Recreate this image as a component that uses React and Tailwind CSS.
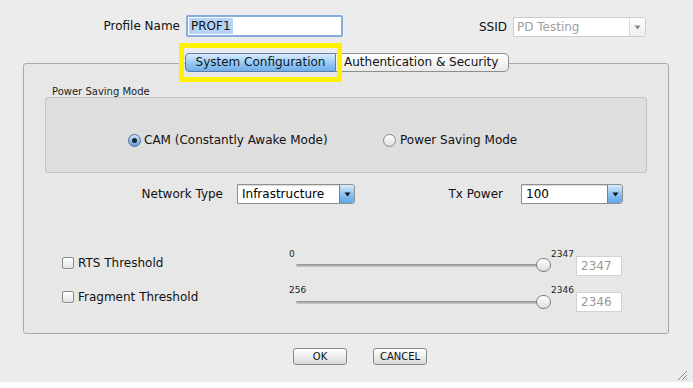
import React from "react";

const Arrow = ({ color = "#111" }) => (
  <svg width="7" height="5" viewBox="0 0 7 5">
    <path d="M0.5 0.5 L6.5 0.5 L3.5 4.5 Z" fill={color} />
  </svg>
);

const Combo = ({ value, width }) => (
  <div className={`flex h-[20px] ${width} border border-[#8f8f8f] bg-white rounded-r-[3px] shadow-[inset_0_1px_1px_rgba(0,0,0,0.15)]`}>
    <div className="flex-1 pl-[4px] text-[12px] leading-[18px] text-black">{value}</div>
    <div className="w-[15px] flex items-center justify-center rounded-r-[3px] border-l border-[#5f86b3] bg-gradient-to-b from-[#d6ebfc] via-[#8ec3f1] to-[#5fa4e8]">
      <Arrow />
    </div>
  </div>
);

const Checkbox = () => (
  <div className="w-[12px] h-[12px] rounded-[2px] border border-[#8a8a8a] bg-gradient-to-b from-white to-[#e4e4e4] shadow-[0_1px_0_rgba(255,255,255,0.6)]" />
);

const Slider = ({ min, max, offset }) => (
  <div className="relative w-[255px] h-[21px]">
    <span className="absolute left-[-7px] top-[-6px] text-[9px] leading-[9px] text-[#222]">{min}</span>
    <div className={`absolute left-0 w-[245px] h-[3px] rounded-full bg-gradient-to-b from-[#8e8e8e] to-[#cfcfcf] ${offset === 1 ? "top-[8px]" : "top-[9px]"}`} />
    <div className={`absolute left-[240px] w-[15px] h-[14px] rounded-full border border-[#7f7f7f] bg-gradient-to-b from-white to-[#dcdcdc] ${offset === 1 ? "top-[2px]" : "top-[3px]"}`} />
    <span className="absolute left-[255px] top-[-6px] text-[9px] leading-[9px] text-[#222]">{max}</span>
  </div>
);

const ThresholdRow = ({ label, min, max, offset, className }) => (
  <div className={`flex items-start h-[21px] ${className}`}>
    <div className={`w-[272px] flex items-center pl-[38px] ${offset === 1 ? "mt-[1px]" : "-mt-[1px]"}`}>
      <Checkbox />
      <span className="ml-[4px] text-[12px] leading-[12px] text-[#111]">{label}</span>
    </div>
    <Slider min={min} max={max} offset={offset} />
    <div className="ml-[25px] w-[46px] h-[20px] border border-[#d2d2d2] bg-white pl-[4px] text-[12px] leading-[19px] text-[#9a9a9a]">
      {max}
    </div>
  </div>
);

export default function App() {
  return (
    <div className="w-[693px] h-[388px] bg-white font-['DejaVu_Sans','Liberation_Sans',sans-serif] text-[#111]">
      <div className="relative w-[693px] h-[382px] bg-[#ececec] flex flex-col">
        {/* top fields */}
        <div className="flex items-start pt-[15px] h-[37px]">
          <div className="w-[180px] text-right text-[12px] leading-[22px]">Profile Name</div>
          <div className="ml-[6px] w-[157px] h-[22px] border-2 border-[#86acdb] rounded-[2px] bg-white flex items-center pl-[1px]">
            <span className="bg-[#b4d3f7] px-[2px] text-[12px] leading-[16px]">PROF1</span>
          </div>
          <div className="w-[164px] text-right text-[12px] leading-[22px] mt-[1px]">SSID</div>
          <div className="ml-[6px] mt-[2px] w-[133px] h-[20px] flex border border-[#cdcdcd] bg-white rounded-r-[3px]">
            <div className="flex-1 pl-[3px] text-[12px] leading-[18px] text-[#a0a0a0]">PD Testing</div>
            <div className="w-[16px] flex items-center justify-center border-l border-[#dcdcdc] bg-gradient-to-b from-white to-[#ededed] rounded-r-[3px]">
              <Arrow color="#888" />
            </div>
          </div>
        </div>

        {/* tabs */}
        <div className="relative z-10 flex mt-[16px] h-[19px] pl-[185px]">
          <div className="relative">
            <div className="w-[151px] h-[19px] rounded-l-[4px] border border-[#5b7fa6] bg-gradient-to-b from-[#dbedfc] via-[#9ccaf2] to-[#6eaeea] text-center text-[12px] leading-[17px] text-[#0d1a2a]">
              System Configuration
            </div>
            <div className="pointer-events-none absolute left-[-6px] top-[-10px] w-[163px] h-[39px] border-[5px] border-[#fff200]" />
          </div>
          <div className="w-[173px] h-[19px] rounded-r-[5px] border border-l-0 border-[#8e8e8e] bg-gradient-to-b from-white to-[#e9e9e9] pl-[8px] text-[12px] leading-[17px]">
            Authentication &amp; Security
          </div>
        </div>

        {/* panel */}
        <div className="-mt-[9px] ml-[23px] w-[646px] h-[271px] border border-[#a9a9a9] rounded-[3px] bg-[#e7e7e7] flex flex-col">
          <div className="pt-[22px] pl-[28px] h-[33px] text-[10px] leading-[11px] text-[#222]">Power Saving Mode</div>
          <div className="ml-[21px] w-[602px] h-[76px] border border-[#c3c3c3] rounded-[3px] bg-[#dedede] flex items-center pt-[10px] pl-[82px]">
            <div className="w-[255px] flex items-center">
              <div className="w-[13px] h-[13px] rounded-full border border-[#4d6f96] bg-gradient-to-b from-[#cfe6fb] to-[#5c9fe3] flex items-center justify-center">
                <div className="w-[5px] h-[5px] rounded-full bg-[#1b2633]" />
              </div>
              <span className="ml-[3px] text-[12px] leading-[14px]">CAM (Constantly Awake Mode)</span>
            </div>
            <div className="flex items-center">
              <div className="w-[13px] h-[13px] rounded-full border border-[#8a8a8a] bg-gradient-to-b from-white to-[#dedede]" />
              <span className="ml-[4px] text-[12px] leading-[14px]">Power Saving Mode</span>
            </div>
          </div>

          <div className="mt-[11px] flex items-center h-[20px]">
            <div className="w-[199px] text-right text-[12px]">Network Type</div>
            <div className="ml-[14px]">
              <Combo value="Infrastructure" width="w-[118px]" />
            </div>
            <div className="w-[148px] text-right text-[12px]">Tx Power</div>
            <div className="ml-[18px]">
              <Combo value="100" width="w-[102px]" />
            </div>
          </div>

          <ThresholdRow label="RTS Threshold" min="0" max="2347" offset={1} className="mt-[52px]" />
          <ThresholdRow label="Fragment Threshold" min="256" max="2346" offset={2} className="mt-[15px]" />
        </div>

        {/* buttons */}
        <div className="flex mt-[14px] pl-[293px]">
          <div className="w-[54px] h-[17px] rounded-[3px] border border-[#8a8a8a] bg-gradient-to-b from-white to-[#d9d9d9] text-center text-[10px] leading-[15px]">OK</div>
          <div className="ml-[26px] w-[54px] h-[17px] rounded-[3px] border border-[#8a8a8a] bg-gradient-to-b from-white to-[#d9d9d9] text-center text-[10px] leading-[15px]">CANCEL</div>
        </div>

        {/* resize grip */}
        <svg className="absolute right-[5px] bottom-[1px]" width="11" height="11" viewBox="0 0 11 11">
          <path d="M1 10 L10 1 M5 10 L10 5 M8.5 10 L10 8.5" stroke="#8c8c8c" strokeWidth="1" />
        </svg>
      </div>
    </div>
  );
}
